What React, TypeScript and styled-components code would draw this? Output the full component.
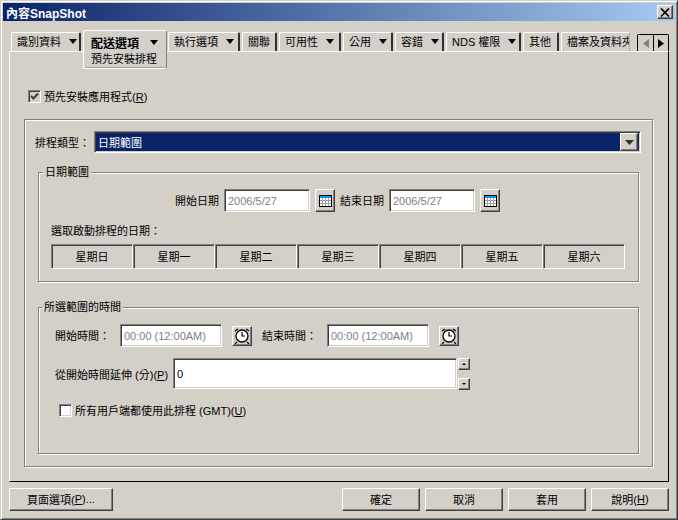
import React from "react"
import styled, { createGlobalStyle } from "styled-components"

const GlobalStyle = createGlobalStyle`
  * { box-sizing: border-box; }
  html, body { margin: 0; padding: 0; background: #d4d0c8; }
  body {
    font-family: "Liberation Sans", "Noto Sans CJK TC", sans-serif;
    font-size: 11px;
    color: #000;
  }
  u { text-underline-offset: 1px; }
`

const raised = `
  background: #d4d0c8;
  border: 1px solid;
  border-color: #fff #404040 #404040 #fff;
  box-shadow: inset -1px -1px 0 #808080;
`

const sunken = `
  border: 1px solid;
  border-color: #808080 #fff #fff #808080;
  box-shadow: inset 1px 1px 0 #404040, inset -1px -1px 0 #d4d0c8;
`

const etched = `
  border: 1px solid #808080;
  box-shadow: inset 1px 1px 0 #fff, 1px 1px 0 #fff;
`

const Window = styled.div`
  width: 678px;
  height: 520px;
  background: #d4d0c8;
  border: 1px solid;
  border-color: #d4d0c8 #404040 #404040 #d4d0c8;
  box-shadow: inset 1px 1px 0 #fff, inset -1px -1px 0 #808080;
  padding: 2px 2px 0 2px;
  overflow: hidden;
`

const TitleBar = styled.div`
  height: 18px;
  display: flex;
  align-items: center;
  justify-content: space-between;
  padding: 0 2px 0 3px;
  background: linear-gradient(90deg, #0a246a, #a6caf0);
  color: #fff;
  font-size: 12px;
  font-weight: bold;
`

const CloseButton = styled.div`
  ${raised}
  width: 16px;
  height: 14px;
  display: flex;
  align-items: center;
  justify-content: center;
`

const TabStrip = styled.div`
  display: flex;
  align-items: flex-end;
  gap: 2px;
  width: 658px;
  height: 21px;
  margin: 9px 0 0 8px;
`

const Tab = styled.div<{ $width: number }>`
  position: relative;
  display: flex;
  align-items: center;
  flex: none;
  width: ${(p) => p.$width}px;
  height: 19px;
  padding: 0 0 2px 5px;
  background: #d4d0c8;
  border-top: 1px solid #fff;
  border-left: 1px solid #fff;
  border-right: 2px solid #303030;
  border-radius: 2px 2px 0 0;
  white-space: nowrap;
  overflow: hidden;
`

const ClippedTab = styled(Tab)`
  border-right: 1px dotted #808080;
`

const ActiveTab = styled.div`
  position: relative;
  z-index: 2;
  align-self: flex-start;
  flex: none;
  width: 84px;
  height: 39px;
  margin-right: -1px;
  padding: 3px 0 0 7px;
  background: #d4d0c8;
  border: 1px solid;
  border-color: #fff #808080 #fff #fff;
  border-radius: 3px;
  box-shadow: inset 0 -1px 0 #a0a0a0;
`

const ActiveLabel = styled.div`
  display: flex;
  align-items: center;
  height: 16px;
  font-size: 12px;
  font-weight: bold;
`

const SubLabel = styled.div`
  height: 16px;
  margin-top: 1px;
  line-height: 16px;
`

const Caret = styled.span<{ $gap: number }>`
  flex: none;
  width: 0;
  height: 0;
  margin-left: ${(p) => p.$gap}px;
  border-left: 4px solid transparent;
  border-right: 4px solid transparent;
  border-top: 5px solid #000;
`

const ScrollPair = styled.div`
  display: flex;
  margin-left: auto;
  height: 17px;
  border: 1px solid #000;
  border-bottom: none;
  border-radius: 2px 2px 0 0;
`

const ScrollButton = styled.div<{ $off?: boolean }>`
  width: 15px;
  display: flex;
  align-items: center;
  justify-content: center;
  background: #d4d0c8;
  border-left: ${(p) => (p.$off ? "none" : "1px solid #000")};
  color: ${(p) => (p.$off ? "#808080" : "#000")};
`

const Panel = styled.div`
  width: 660px;
  height: 431px;
  margin-left: 6px;
  padding: 38px 0 0 13px;
  background: #d4d0c8;
  border: 1px solid;
  border-color: #fff #000 #000 #fff;
`

const Check = styled.span<{ $checked?: boolean }>`
  ${sunken}
  flex: none;
  width: 13px;
  height: 13px;
  display: flex;
  align-items: center;
  justify-content: center;
  background: ${(p) => (p.$checked ? "#d4d0c8" : "#fff")};
`

const CheckRow = styled.div<{ $indent: number; $top?: number }>`
  display: flex;
  align-items: center;
  gap: 3px;
  height: 13px;
  margin: ${(p) => p.$top ?? 0}px 0 0 ${(p) => p.$indent}px;
`

const CheckLabel = styled.span`
  padding-bottom: 2px;
`

const OuterGroup = styled.div`
  ${etched}
  width: 629px;
  height: 348px;
  margin: 16px 0 0 1px;
  padding: 11px 0 0 10px;
`

const ComboRow = styled.div`
  display: flex;
  align-items: center;
  height: 22px;
`

const ComboLabel = styled.span`
  width: 59px;
  font-size: 11px;
`

const Combo = styled.div`
  ${sunken}
  width: 547px;
  height: 22px;
  padding: 2px 2px 2px 3px;
  display: flex;
  align-items: center;
  justify-content: space-between;
  background: #0a246a;
  color: #fff;
`

const ComboButton = styled.div`
  ${raised}
  width: 18px;
  height: 18px;
  display: flex;
  align-items: center;
  justify-content: center;
`

const Fieldset = styled.div<{ $height: number; $top: number }>`
  ${etched}
  position: relative;
  width: 601px;
  height: ${(p) => p.$height}px;
  margin: ${(p) => p.$top}px 0 0 3px;
`

const Legend = styled.span<{ $left: number }>`
  position: absolute;
  top: -8px;
  left: ${(p) => p.$left}px;
  padding: 0 2px;
  background: #d4d0c8;
  line-height: 15px;
`

const FieldRow = styled.div<{ $indent: number; $gap?: number }>`
  display: flex;
  align-items: center;
  gap: ${(p) => p.$gap ?? 5}px;
  padding-left: ${(p) => p.$indent}px;
`

const DateRow = styled(FieldRow)`
  margin-top: 16px;
`

const TimeRow = styled(FieldRow)`
  margin-top: 16px;
`

const RowLabel = styled.span<{ $width: number }>`
  flex: none;
  width: ${(p) => p.$width}px;
  padding-bottom: 2px;
  white-space: nowrap;
`

const ReadOnlyInput = styled.div<{ $width: number }>`
  ${sunken}
  width: ${(p) => p.$width}px;
  height: 23px;
  padding-left: 3px;
  display: flex;
  align-items: center;
  background: #fff;
  color: #808080;
  white-space: nowrap;
  overflow: hidden;
`

const IconButton = styled.div<{ $height: number }>`
  ${raised}
  flex: none;
  width: 20px;
  height: ${(p) => p.$height}px;
  display: flex;
  align-items: center;
  justify-content: center;
`

const PickLabel = styled.div`
  height: 14px;
  line-height: 14px;
  margin: 12px 0 0 12px;
`

const WeekRow = styled.div`
  display: grid;
  grid-template-columns: repeat(7, 82px);
  height: 25px;
  margin: 6px 0 0 12px;
`

const WeekCell = styled.div`
  ${sunken}
  display: flex;
  align-items: center;
  justify-content: center;
  padding-bottom: 2px;
  box-shadow: inset 1px 1px 0 #404040;
`

const DelayRow = styled(FieldRow)`
  align-items: flex-start;
  margin-top: 11px;
`

const DelayLabel = styled(RowLabel)`
  padding: 8px 0 0;
`

const DelayInput = styled.div`
  ${sunken}
  width: 284px;
  height: 31px;
  padding-left: 3px;
  display: flex;
  align-items: center;
  background: #fff;
`

const Spinner = styled.div`
  display: flex;
  flex-direction: column;
  justify-content: space-between;
  height: 32px;
`

const SpinButton = styled.div`
  ${raised}
  width: 12px;
  height: 12px;
  display: flex;
  align-items: center;
  justify-content: center;
`

const SpinArrow = styled.span<{ $up?: boolean }>`
  width: 0;
  height: 0;
  border-left: 2px solid transparent;
  border-right: 2px solid transparent;
  ${(p) => (p.$up ? "border-bottom: 2px solid #000;" : "border-top: 2px solid #000;")}
`

const Footer = styled.div`
  display: flex;
  gap: 5px;
  margin: 6px 0 0 6px;
  width: 660px;
`

const Button = styled.div<{ $width: number }>`
  ${raised}
  width: ${(p) => p.$width}px;
  height: 23px;
  padding-bottom: 2px;
  display: flex;
  align-items: center;
  justify-content: center;
`

const PageButton = styled(Button)`
  margin-right: auto;
`

const CalendarIcon = () => (
  <svg width="13" height="12" viewBox="0 0 13 12" shapeRendering="crispEdges">
    <rect x="0" y="0" width="13" height="12" fill="#000" />
    <rect x="1" y="1" width="11" height="2" fill="#0a9af0" />
    <rect x="1" y="3" width="11" height="8" fill="#fff" />
    <path d="M3.5 3v8M6.5 3v8M9.5 3v8M1 5.5h11M1 8.5h11" stroke="#a0a0a0" strokeWidth="1" />
  </svg>
)

const ClockIcon = () => (
  <svg width="16" height="16" viewBox="0 0 16 16">
    <path d="M1 3l3-2M15 3l-3-2M3 14l-2 2M13 14l2 2" stroke="#000" strokeWidth="1.2" />
    <circle cx="8" cy="8" r="6" fill="#fff" stroke="#000" strokeWidth="1.3" />
    <path d="M8 4v4h3" fill="none" stroke="#000" strokeWidth="1.2" />
  </svg>
)

const DownArrow = () => (
  <svg width="9" height="5" viewBox="0 0 9 5">
    <path d="M0 0h9L4.5 5z" fill="#303030" />
  </svg>
)

const TickIcon = ({ color }: { color: string }) => (
  <svg width="9" height="9" viewBox="0 0 9 9">
    <path d="M1 4l2.5 2.5L8 1.5" fill="none" stroke={color} strokeWidth="2" />
  </svg>
)

const CloseIcon = () => (
  <svg width="10" height="9" viewBox="0 0 10 9">
    <path d="M1 0.5l8 8M9 0.5l-8 8" stroke="#000" strokeWidth="1.7" />
  </svg>
)

const SideArrow = ({ left }: { left?: boolean }) => (
  <svg width="6" height="9" viewBox="0 0 6 9">
    <path d={left ? "M6 0v9L0 4.5z" : "M0 0v9l6-4.5z"} fill="currentColor" />
  </svg>
)

const weekDays = ["星期日", "星期一", "星期二", "星期三", "星期四", "星期五", "星期六"]

const App: React.FC = () => {
  return (
    <Window>
      <GlobalStyle />
      <TitleBar>
        <span>內容SnapShot</span>
        <CloseButton>
          <CloseIcon />
        </CloseButton>
      </TitleBar>

      <TabStrip>
        <Tab $width={70}>
          識別資料
          <Caret $gap={8} />
        </Tab>
        <ActiveTab>
          <ActiveLabel>
            配送選項
            <Caret $gap={11} />
          </ActiveLabel>
          <SubLabel>預先安裝排程</SubLabel>
        </ActiveTab>
        <Tab $width={72}>
          執行選項
          <Caret $gap={8} />
        </Tab>
        <Tab $width={35}>關聯</Tab>
        <Tab $width={62}>
          可用性
          <Caret $gap={8} />
        </Tab>
        <Tab $width={50}>
          公用
          <Caret $gap={8} />
        </Tab>
        <Tab $width={49}>
          容錯
          <Caret $gap={8} />
        </Tab>
        <Tab $width={75}>
          NDS 權限
          <Caret $gap={8} />
        </Tab>
        <Tab $width={36}>其他</Tab>
        <ClippedTab $width={69}>檔案及資料夾</ClippedTab>
        <ScrollPair>
          <ScrollButton $off>
            <SideArrow left />
          </ScrollButton>
          <ScrollButton>
            <SideArrow />
          </ScrollButton>
        </ScrollPair>
      </TabStrip>

      <Panel>
        <CheckRow $indent={5}>
          <Check $checked>
            <TickIcon color="#404040" />
          </Check>
          <CheckLabel>
            預先安裝應用程式(<u>R</u>)
          </CheckLabel>
        </CheckRow>

        <OuterGroup>
          <ComboRow>
            <ComboLabel>排程類型：</ComboLabel>
            <Combo>
              <span>日期範圍</span>
              <ComboButton>
                <DownArrow />
              </ComboButton>
            </Combo>
          </ComboRow>

          <Fieldset $height={110} $top={19}>
            <Legend $left={4}>日期範圍</Legend>
            <DateRow $indent={136}>
              <RowLabel $width={44}>開始日期</RowLabel>
              <ReadOnlyInput $width={86}>2006/5/27</ReadOnlyInput>
              <IconButton $height={23}>
                <CalendarIcon />
              </IconButton>
              <RowLabel $width={44}>結束日期</RowLabel>
              <ReadOnlyInput $width={86}>2006/5/27</ReadOnlyInput>
              <IconButton $height={23}>
                <CalendarIcon />
              </IconButton>
            </DateRow>
            <PickLabel>選取啟動排程的日期：</PickLabel>
            <WeekRow>
              {weekDays.map((day) => (
                <WeekCell key={day}>{day}</WeekCell>
              ))}
            </WeekRow>
          </Fieldset>

          <Fieldset $height={147} $top={25}>
            <Legend $left={3}>所選範圍的時間</Legend>
            <TimeRow $indent={16} $gap={10}>
              <RowLabel $width={55}>開始時間：</RowLabel>
              <ReadOnlyInput $width={102}>00:00 (12:00AM)</ReadOnlyInput>
              <IconButton $height={20}>
                <ClockIcon />
              </IconButton>
              <RowLabel $width={55}>結束時間：</RowLabel>
              <ReadOnlyInput $width={102}>00:00 (12:00AM)</ReadOnlyInput>
              <IconButton $height={20}>
                <ClockIcon />
              </IconButton>
            </TimeRow>
            <DelayRow $indent={16} $gap={1}>
              <DelayLabel $width={117}>
                從開始時間延伸 (分)(<u>P</u>)
              </DelayLabel>
              <DelayInput>0</DelayInput>
              <Spinner>
                <SpinButton>
                  <SpinArrow $up />
                </SpinButton>
                <SpinButton>
                  <SpinArrow />
                </SpinButton>
              </Spinner>
            </DelayRow>
            <CheckRow $indent={20} $top={14}>
              <Check />
              <CheckLabel>
                所有用戶端都使用此排程 (GMT)(<u>U</u>)
              </CheckLabel>
            </CheckRow>
          </Fieldset>
        </OuterGroup>
      </Panel>

      <Footer>
        <PageButton $width={104}>
          頁面選項(<u>P</u>)...
        </PageButton>
        <Button $width={78}>確定</Button>
        <Button $width={78}>取消</Button>
        <Button $width={78}>套用</Button>
        <Button $width={78}>
          說明(<u>H</u>)
        </Button>
      </Footer>
    </Window>
  )
}

export default App
